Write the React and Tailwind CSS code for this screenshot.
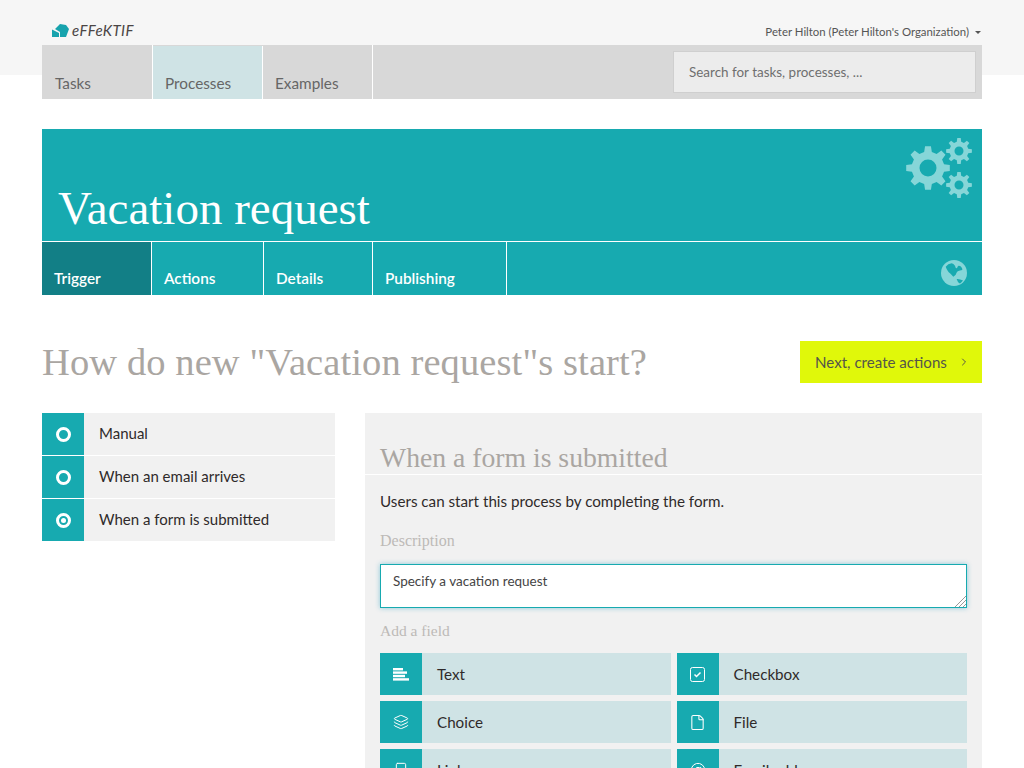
import React from "react";
import { Layers, File, Smartphone, AtSign, ChevronRight } from "lucide-react";

const sans = "font-['Lato','Noto_Sans',sans-serif]";
const slab = "font-['Liberation_Serif','DejaVu_Serif',serif]";

// builds a gear outline around cx,cy
const gearPath = (cx, cy, outer, inner, teeth) => {
  const pts = [];
  const step = (Math.PI * 2) / teeth;
  for (let i = 0; i < teeth; i++) {
    const a = i * step - Math.PI / 2;
    const at = (r, o) => `${(cx + r * Math.cos(a + o * step)).toFixed(2)} ${(cy + r * Math.sin(a + o * step)).toFixed(2)}`;
    pts.push(at(inner, -0.3), at(outer, -0.17), at(outer, 0.17), at(inner, 0.3));
  }
  return `M${pts.join(" L")} Z`;
};

const hole = (cx, cy, r) => `M${cx - r} ${cy} a${r} ${r} 0 1 0 ${r * 2} 0 a${r} ${r} 0 1 0 ${-r * 2} 0 Z`;

const Gears = () => (
  <svg width="68" height="62" viewBox="0 0 68 62" fill="#86d6d8" fillRule="evenodd" className="mr-[9px] mt-[9px]">
    <path d={gearPath(23, 30, 22, 16.5, 8) + hole(23, 30, 8.5)} />
    <path d={gearPath(54, 13, 13, 9.5, 8) + hole(54, 13, 4.5)} />
    <path d={gearPath(54, 47, 13, 9.5, 8) + hole(54, 47, 4.5)} />
  </svg>
);

const Globe = () => (
  <svg width="26" height="26" viewBox="0 0 26 26" className="mr-[15px] mt-[18px]">
    <circle cx="13" cy="13" r="13" fill="#86d6d8" />
    <path d="M4.7 6.7 Q7 3.6 10.7 3.3 Q12.5 3.6 14 5.7 Q14.5 8.6 16 8.2 Q16.4 6.6 17.5 5.8 Q19.5 5.8 20 6.7 Q21.6 8.2 21.3 10 Q19 10.2 16.7 11.3 Q15.4 12.8 14.7 14.7 Q13.6 15.6 12.3 16.7 Q10.8 15.2 9 13.3 Q7.6 12.2 6.7 10.7 Q5.4 8.8 4.7 6.7 Z" fill="#17aab0" />
    <path d="M15.7 19 Q19 18.8 22 20.5 Q20.5 22.6 19 23.5 Q17 23 15.7 19 Z" fill="#17aab0" />
  </svg>
);

const Logo = () => (
  <svg width="18" height="14" viewBox="0 0 18 14" fill="#17a3ad">
    <path d="M3 5 L8 0 L14 1 L17 5 L14 13 L8 13 L8 8 Z" />
    <path d="M0 5.5 L7 9 L7 13 L0 13 Z" />
  </svg>
);

const TextIcon = () => (
  <svg width="16" height="13" viewBox="0 0 16 13" fill="white">
    <rect x="0" y="0" width="10" height="2.4" />
    <rect x="0" y="3.4" width="14" height="2.4" />
    <rect x="0" y="6.8" width="12" height="2.4" />
    <rect x="0" y="10.2" width="16" height="2.4" />
  </svg>
);

const CheckIcon = () => (
  <svg width="15" height="15" viewBox="0 0 15 15" fill="none" stroke="white">
    <rect x="0.5" y="0.5" width="14" height="14" rx="2" />
    <path d="M4.5 7.5 L6.5 9.5 L10.5 5.5" strokeWidth="1.5" />
  </svg>
);

const Radio = ({ selected }) => (
  <span className="w-[15px] h-[15px] rounded-full border-[3px] border-white flex items-center justify-center">
    {selected && <span className="w-[5px] h-[5px] rounded-full bg-white" />}
  </span>
);

const triggers = [
  { label: "Manual" },
  { label: "When an email arrives" },
  { label: "When a form is submitted", selected: true },
];

const fields = [
  { label: "Text", icon: <TextIcon /> },
  { label: "Checkbox", icon: <CheckIcon /> },
  { label: "Choice", icon: <Layers size={16} color="white" strokeWidth={1.5} /> },
  { label: "File", icon: <File size={17} color="white" strokeWidth={1.5} /> },
  { label: "Link", icon: <Smartphone size={16} color="white" strokeWidth={1.5} /> },
  { label: "Email address", icon: <AtSign size={16} color="white" strokeWidth={1.5} /> },
];

const App = () => {
  return (
    <div className={`h-[768px] overflow-hidden px-[42px] pt-[45px] bg-[linear-gradient(#f6f6f6_75px,#ffffff_75px)] text-[#2f2a2a] relative ${sans}`}>
      <div className="absolute left-[52px] top-[23px] flex items-center gap-[2px]">
        <Logo />
        <span className="italic text-[15px] leading-[15px] tracking-[0.4px] text-[#4a4545]">eFFeKTIF</span>
      </div>
      <div className="absolute right-[43px] top-[24px] flex items-center gap-[6px] text-[11.4px] leading-[16px] text-[#555]">
        Peter Hilton (Peter Hilton's Organization)
        <span className="w-0 h-0 border-x-[3px] border-x-transparent border-t-[3px] border-t-[#555]" />
      </div>

      <nav className="h-[54px] bg-[#d8d8d8] flex justify-between text-[15.3px] text-[#666]">
        <div className="flex">
          <div className="w-[111px] border-r border-white pl-[13px] pt-[27px]">Tasks</div>
          <div className="w-[110px] border-r border-white mt-px pl-[12px] pt-[26px] bg-[#cfe3e5]">Processes</div>
          <div className="w-[110px] border-r border-white pl-[12px] pt-[27px]">Examples</div>
        </div>
        <div className="w-[303px] h-[42px] mt-[6px] mr-[6px] bg-[#ececec] border border-[#cfcfcf] pl-[15px] flex items-center text-[13.45px] text-[#6f6f6f]">
          Search for tasks, processes, ...
        </div>
      </nav>

      <header className="mt-[30px] h-[166px] bg-[#17aab0] flex flex-col text-white">
        <div className="h-[113px] border-b border-white flex justify-between pl-[16px]">
          <h1 className={`${slab} text-[47px] leading-[54px] mt-[52px] font-normal`}>Vacation request</h1>
          <Gears />
        </div>
        <div className="flex-1 flex justify-between text-[15.35px] font-semibold">
          <div className="flex">
            <div className="w-[110px] border-r border-white pl-[12px] pt-[25px] bg-[#127f86]">Trigger</div>
            <div className="w-[112px] border-r border-white pl-[12px] pt-[25px]">Actions</div>
            <div className="w-[109px] border-r border-white pl-[12px] pt-[25px]">Details</div>
            <div className="w-[134px] border-r border-white pl-[12px] pt-[25px]">Publishing</div>
          </div>
          <Globe />
        </div>
      </header>

      <div className="mt-[46px] flex justify-between items-center">
        <h2 className={`${slab} text-[38.5px] leading-[42px] tracking-[0.1px] text-[#aaa6a2] font-normal`}>How do new "Vacation request"s start?</h2>
        <div className="w-[182px] h-[42px] bg-[#e0f80a] flex items-center pl-[15px] gap-[11px] text-[15.1px] text-[#55554a]">
          Next, create actions
          <ChevronRight size={12} />
        </div>
      </div>

      <div className="mt-[30px] flex gap-[30px]">
        <div className="w-[293px] flex flex-col gap-px shrink-0">
          {triggers.map((t) => (
            <div key={t.label} className="h-[42px] flex items-center bg-[#f1f1f1] text-[15px]">
              <span className="w-[42px] h-[42px] bg-[#17aab0] flex items-center justify-center mr-[15px]">
                <Radio selected={t.selected} />
              </span>
              <span className="pb-[2px]">{t.label}</span>
            </div>
          ))}
        </div>

        <div className="flex-1 bg-[#f1f1f1] h-[400px]">
          <h3 className={`${slab} text-[27.7px] leading-[32px] pt-[29px] pl-[15px] h-[62px] border-b border-white text-[#aaa6a2] font-normal box-border`}>When a form is submitted</h3>
          <p className="mt-[15px] pl-[15px] text-[15.2px] leading-[22px]">Users can start this process by completing the form.</p>
          <div className={`mt-[19px] pl-[15px] text-[16px] leading-[20px] text-[#bdbab7] ${slab}`}>Description</div>
          <div className="mt-[13px] mx-[15px] h-[44px] relative bg-white border border-[#17aab0] shadow-[0_0_5px_rgba(23,150,190,0.45)] pl-[12px] pt-[7px] text-[13.5px] leading-[18px] text-[#444]">
            Specify a vacation request
            <svg className="absolute right-0 bottom-0" width="12" height="12" viewBox="0 0 12 12" stroke="#999" fill="none">
              <path d="M1 12 L12 1 M5 12 L12 5 M9 12 L12 9" />
            </svg>
          </div>
          <div className={`mt-[13px] pl-[15px] text-[15.5px] leading-[20px] text-[#bdbab7] ${slab}`}>Add a field</div>
          <div className="mt-[12px] mx-[15px] grid grid-cols-2 gap-x-[6px] gap-y-[6px]">
            {fields.map((f) => (
              <div key={f.label} className="h-[42px] flex items-center bg-[#cfe3e5] text-[15.2px]">
                <span className="w-[42px] h-[42px] bg-[#17aab0] flex items-center justify-center mr-[15px]">{f.icon}</span>
                <span>{f.label}</span>
              </div>
            ))}
          </div>
        </div>
      </div>
    </div>
  );
};

export default App;
